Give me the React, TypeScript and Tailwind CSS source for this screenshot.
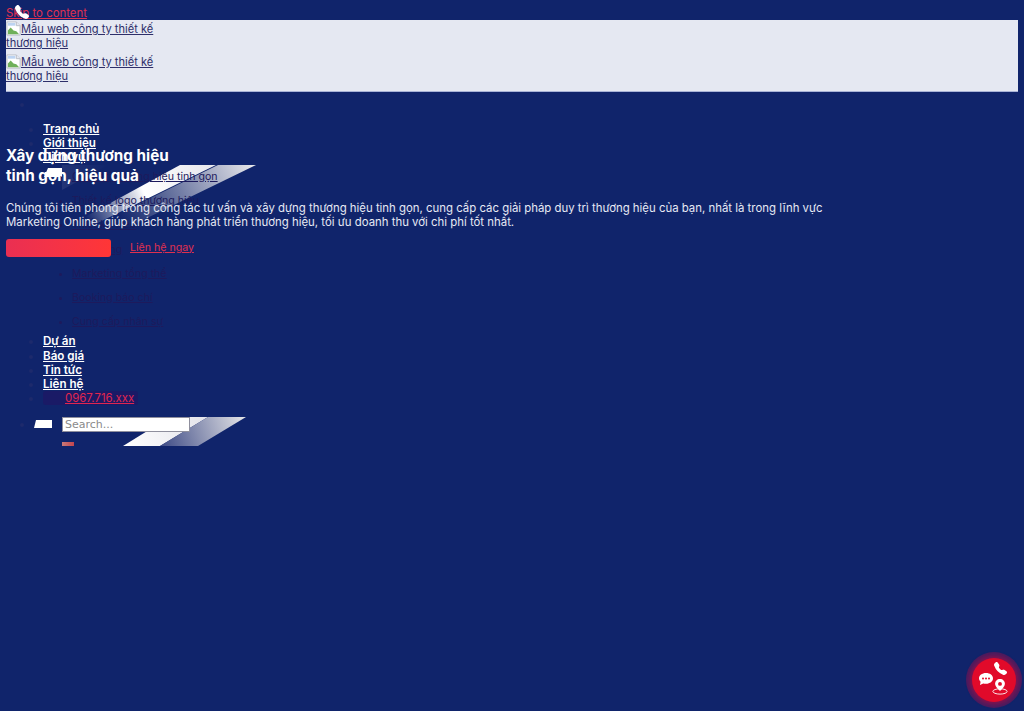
import { BsTelephoneFill } from "react-icons/bs";

const Broken = () => (
  <svg viewBox="0 0 16 16" className="inline-block w-[15px] h-[15px] align-[-3px]">
    <path d="M1 1h10l4 4v10H1z" fill="#fff" stroke="#b9bcc4" strokeWidth="1" />
    <path d="M2 2h8v3H2z" fill="#bcd3f2" />
    <path d="M2 14v-4l3-3 3 3 3 1 3 3z" fill="#6fb05a" />
    <path d="M11 1v4h4" fill="#e5e8f2" stroke="#b9bcc4" />
  </svg>
);

const sub = [
  "Quản trị thương hiệu tinh gọn",
  "Thiết kế logo thương hiệu",
  "Thiết kế web",
  "Marketing",
  "Marketing tổng thể",
  "Booking báo chí",
  "Cung cấp nhân sự",
];

const Logo = () => (
  <a href="#" className="block w-[150px] text-[11.1px] leading-[14.4px] underline text-[#2e2f6a]">
    <Broken />Mẫu web công ty thiết kế thương hiệu
  </a>
);

export default function App() {
  return (
    <div className="relative w-[1024px] h-[711px] overflow-hidden bg-[#10246b] px-[6px] pt-[6px] font-['Inter',sans-serif] text-[11.4px] leading-[14.4px]">
      <a href="#" className="block h-[14px] underline text-[#e0304f]">Skip to content</a>
      <BsTelephoneFill className="absolute left-[15px] top-[5px] w-[14px] h-[14px] text-white z-30" />

      <div className="flex flex-col gap-[3px] h-[72px] bg-[#e5e8f2] border-b border-[#a9b3d6] pt-[1px]">
        <Logo />
        <Logo />
      </div>

      <svg className="absolute left-0 top-0 w-[300px] h-[460px] z-0" viewBox="0 0 300 460">
        <defs>
          <linearGradient id="a" gradientUnits="userSpaceOnUse" x1="90" y1="226" x2="217" y2="165">
            <stop offset="0" stopColor="#10246b" />
            <stop offset="0.45" stopColor="#ffffff" />
            <stop offset="1" stopColor="#e6e6ec" />
          </linearGradient>
          <linearGradient id="b" gradientUnits="userSpaceOnUse" x1="125" y1="228" x2="255" y2="165">
            <stop offset="0" stopColor="#10246b" />
            <stop offset="1" stopColor="#e9e9ec" />
          </linearGradient>
          <linearGradient id="c" gradientUnits="userSpaceOnUse" x1="123" y1="446" x2="208" y2="417">
            <stop offset="0" stopColor="#ffffff" />
            <stop offset="1" stopColor="#e3e3ea" />
          </linearGradient>
          <linearGradient id="d" gradientUnits="userSpaceOnUse" x1="160" y1="446" x2="246" y2="417">
            <stop offset="0" stopColor="#3d4a85" />
            <stop offset="1" stopColor="#e6e6e8" />
          </linearGradient>
          <linearGradient id="e" gradientUnits="userSpaceOnUse" x1="62" y1="444" x2="74" y2="444">
            <stop offset="0" stopColor="#c87a78" />
            <stop offset="1" stopColor="#c2444e" />
          </linearGradient>
          <linearGradient id="f" gradientUnits="userSpaceOnUse" x1="60" y1="175" x2="108" y2="165">
            <stop offset="0" stopColor="#5f6a99" />
            <stop offset="1" stopColor="#10246b" />
          </linearGradient>
        </defs>
        <path d="M62 165H108L62 190z" fill="url(#f)" opacity="0.25" />
        <path d="M48 168H62V177H44z" fill="#ffffff" />
        <path d="M180 165H216L71 236H50z" fill="url(#a)" />
        <path d="M218 165H256L110 236H73z" fill="url(#b)" />
        <path d="M170 417H208L160 446H123z" fill="url(#c)" />
        <path d="M208 417H246L198 446H160z" fill="url(#d)" />
        <path d="M36 420H52V428H34z" fill="#ffffff" />
        <path d="M62 442H74V446H62z" fill="url(#e)" />
      </svg>

      <ul className="relative z-10 list-disc mt-[5px] ml-[28px] marker:text-[#1d2a6c]">
        <li className="h-[14px]">&nbsp;</li>
      </ul>

      <ul className="relative z-10 list-disc mt-[11px] ml-[37px] text-[11.6px] leading-[14px] font-semibold text-white marker:text-[#1d2a6c]">
        {["Trang chủ", "Giới thiệu", "Dịch vụ"].map((t) => (
          <li key={t} className="h-[14px]"><a href="#" className="underline">{t}</a></li>
        ))}
      </ul>

      <ul className="relative z-10 list-disc mt-[1px] ml-[66px] text-[10.6px] text-[#1d1a5c] font-normal marker:text-[#1d1a5c]">
        {sub.map((t) => (
          <li key={t} className="h-[24.2px] pt-[5px]"><a href="#" className="underline decoration-[#1d1a5c]">{t}</a></li>
        ))}
      </ul>

      <ul className="relative z-10 list-disc ml-[37px] text-[11.6px] leading-[14px] font-semibold text-white marker:text-[#1d2a6c]">
        {["Dự án", "Báo giá", "Tin tức", "Liên hệ"].map((t) => (
          <li key={t} className="h-[14.2px]"><a href="#" className="underline">{t}</a></li>
        ))}
        <li className="h-[14px]">
          <a href="#" className="inline-block w-[95px] h-[14px] pl-[22px] bg-[#1a1a66] rounded-[3px] text-[11.4px] text-[#e0264f] underline font-normal">0967.716.xxx</a>
        </li>
      </ul>

      <ul className="relative z-10 list-disc mt-[12px] ml-[28px] marker:text-[#1d2a6c]">
        <li>
          <input
            readOnly
            placeholder="Search..."
            className="block ml-[28px] w-[128px] h-[15px] bg-white border border-[#8f8f9d] px-[2px] text-[11px] font-['DejaVu_Sans',sans-serif] placeholder:text-[#8a8a8a] text-black outline-none"
          />
        </li>
      </ul>

      <div className="absolute left-[6px] top-[146px] z-20 w-[1012px] text-white">
        <h1 className="text-[15.25px] leading-[20px] font-bold">Xây dựng thương hiệu<br />tinh gọn, hiệu quả</h1>
        <p className="mt-[15px] w-[840px] text-[#e6e9f4]">
          Chúng tôi tiên phong trong công tác tư vấn và xây dựng thương hiệu tinh gọn, cung cấp các giải pháp duy trì thương hiệu của bạn, nhất là trong lĩnh vực Marketing Online, giúp khách hàng phát triển thương hiệu, tối ưu doanh thu với chi phí tốt nhất.
        </p>
        <div className="mt-[9px] flex items-center gap-[19px]">
          <span className="block w-[105px] h-[18px] rounded-[3px] bg-gradient-to-r from-[#ea2f52] to-[#ff3636]" />
          <a href="#" className="underline text-[10.6px] text-[#e0304f]">Liên hệ ngay</a>
        </div>
      </div>

      <div className="fixed left-[966px] top-[652px] z-40 w-[56px] h-[56px] rounded-full bg-[#a30f4a]/40 flex items-center justify-center">
        <div className="relative w-[44px] h-[44px] rounded-full bg-[#e10a2a] shadow-[0_0_4px_2px_rgba(200,10,60,0.5)]">
          <BsTelephoneFill className="absolute left-[22px] top-[4px] w-[13px] h-[13px] text-white" />
          <svg viewBox="0 0 14 12" className="absolute left-[7px] top-[15px] w-[14px] h-[12px]">
            <path d="M7 0C3 0 0 2.3 0 5.3c0 1.3.6 2.5 1.6 3.4L1 12l3.2-1.6c.9.3 1.8.4 2.8.4 4 0 7-2.4 7-5.5S11 0 7 0z" fill="#fff" />
            <circle cx="4" cy="5.4" r="1" fill="#e10a2a" />
            <circle cx="7" cy="5.4" r="1" fill="#e10a2a" />
            <circle cx="10" cy="5.4" r="1" fill="#e10a2a" />
          </svg>
          <svg viewBox="0 0 18 18" className="absolute left-[20px] top-[21px] w-[16px] h-[16px]">
            <path d="M9 0C5.800 0 3.500 2.400 3.500 5.400 3.500 9 9 13.500 9 13.500s5.500-4.500 5.500-8.100C14.500 2.400 12.200 0 9 0z" fill="#fff" />
            <circle cx="9" cy="5.500" r="2.200" fill="#e10a2a" />
            <ellipse cx="9" cy="14" rx="8" ry="3" fill="none" stroke="#fff" strokeWidth="1" />
          </svg>
        </div>
      </div>
    </div>
  );
}
